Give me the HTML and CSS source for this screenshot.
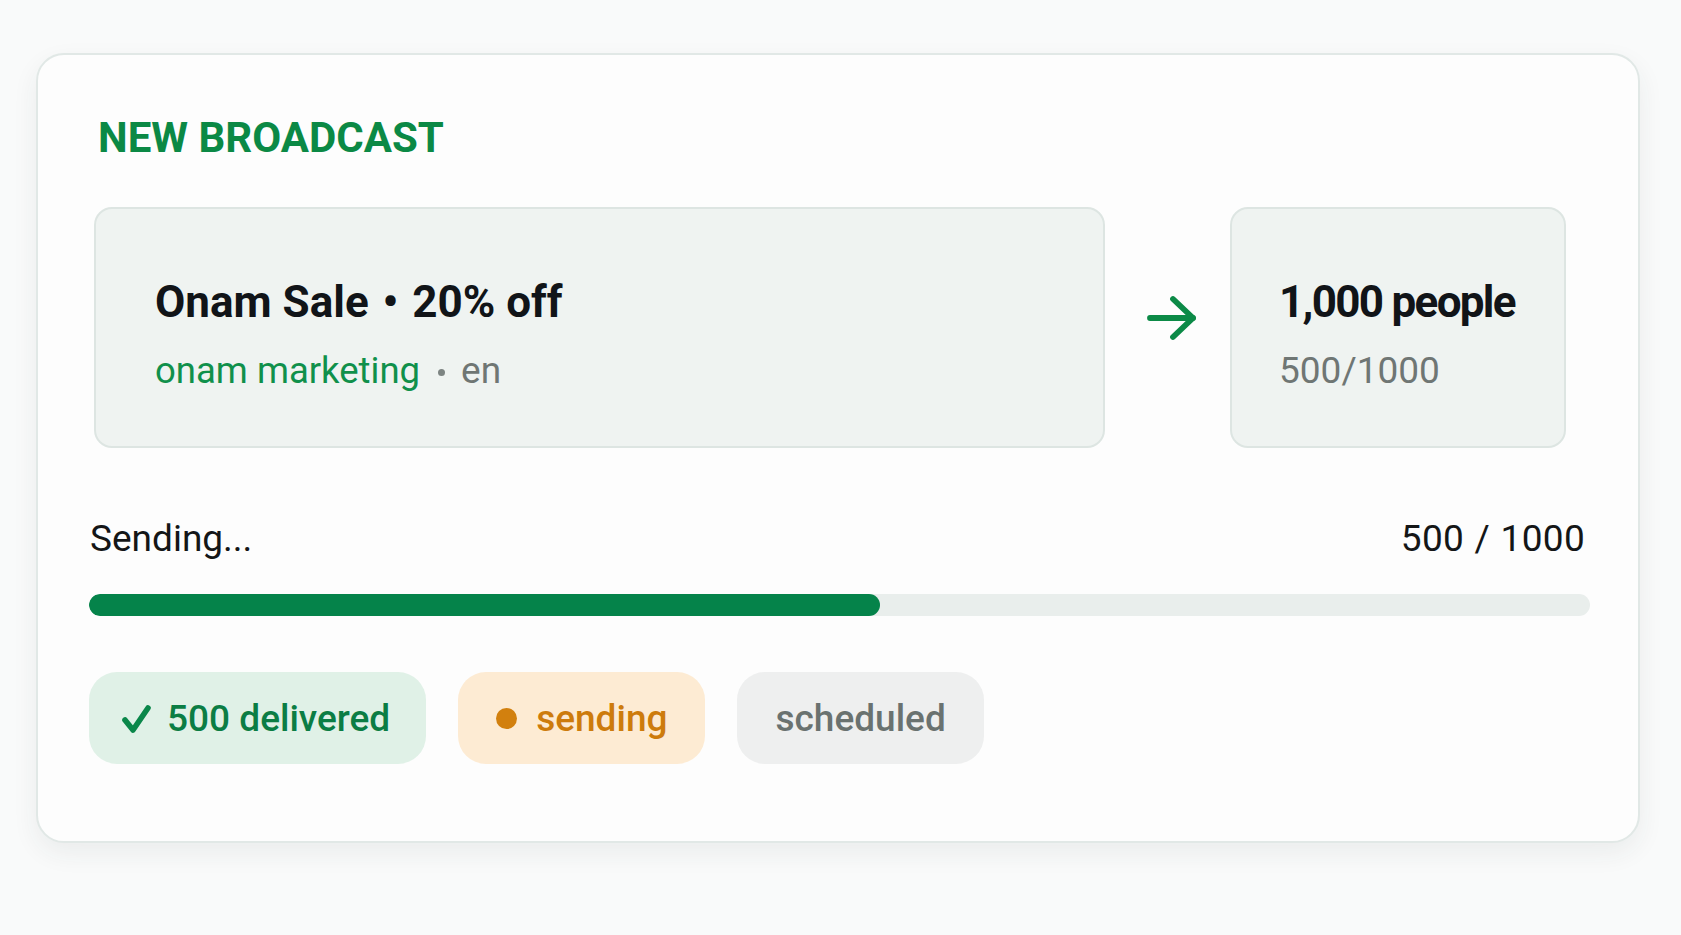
FILE: index.html
```html
<!DOCTYPE html>
<html lang="en">
<head>
<meta charset="utf-8">
<title>New Broadcast</title>
<link rel="stylesheet" href="styles.css">
</head>
<body>
<main class="card">
  <h1 class="heading">NEW BROADCAST</h1>
  <section class="flow">
    <div class="box box-message">
      <div class="box-title">Onam Sale <span class="title-sep">•</span> 20% off</div>
      <div class="box-sub"><span class="tag">onam marketing</span><span class="sep"></span><span class="muted">en</span></div>
    </div>
    <div class="arrow">
      <svg width="52" height="46" viewBox="0 0 52 46" fill="none" stroke="currentColor" stroke-width="5.8" stroke-linecap="round" stroke-linejoin="round">
        <path d="M4 23 H47"/>
        <path d="M27 4 L47 23 L27 42"/>
      </svg>
    </div>
    <div class="box box-audience">
      <div class="box-title audience-title">1,000 people</div>
      <div class="box-sub muted-strong">500/1000</div>
    </div>
  </section>
  <section class="progress">
    <div class="progress-head">
      <span>Sending...</span>
      <span class="count">500 / 1000</span>
    </div>
    <div class="track"><div class="fill" style="width: 52.7%"></div></div>
  </section>
  <section class="pills">
    <span class="pill pill-done">
      <svg class="check" width="30" height="30" viewBox="0 0 30 30" fill="none" stroke="currentColor" stroke-width="5.6" stroke-linecap="round" stroke-linejoin="round">
        <path d="M4 16 L12 26 L27 4"/>
      </svg>
      500 delivered
    </span>
    <span class="pill pill-sending"><span class="dot"></span>sending</span>
    <span class="pill pill-scheduled">scheduled</span>
  </section>
</main>
</body>
</html>
```

FILE: styles.css
```css
* { box-sizing: border-box; }

html, body {
  margin: 0;
  padding: 0;
}

body {
  background: #f9fafa;
  font-family: Roboto, "Liberation Sans", sans-serif;
  color: #121417;
  width: 1681px;
  height: 935px;
  overflow: hidden;
}

.card {
  margin: 53px 0 0 36px;
  width: 1604px;
  height: 790px;
  background: #fdfdfd;
  border: 2px solid #e1e8e6;
  border-radius: 28px;
  box-shadow: 0 10px 26px rgba(40, 60, 55, 0.07);
  padding: 62px 48px 0 51px;
}

.heading {
  margin: 0 0 48px 9px;
  font-size: 42px;
  line-height: 42px;
  font-weight: 700;
  color: #0b8945;
}

.flow {
  display: flex;
  align-items: center;
  margin: 0 24px 0 5px;
}

.box {
  height: 241px;
  background: #eff3f1;
  border: 2px solid #dde5e2;
  border-radius: 18px;
  display: flex;
  flex-direction: column;
  padding-top: 71px;
}

.box-message {
  flex: 1;
  padding-left: 59px;
}

.box-audience {
  width: 336px;
  padding-left: 47px;
}

.box-title {
  font-size: 44px;
  line-height: 44px;
  font-weight: 700;
  color: #111418;
}

.title-sep { margin: 0 3px; }

.audience-title { letter-spacing: -1.7px; }

.box-sub {
  margin-top: 28px;
  font-size: 37px;
  line-height: 37px;
  color: #757c7a;
  display: flex;
  align-items: center;
}

.tag { color: #10904b; font-size: 36.5px; }
.sep {
  width: 7px;
  height: 7px;
  border-radius: 50%;
  background: #7d8482;
  margin: 4px 16px 0 18px;
}
.muted { color: #6f7674; }
.muted-strong { color: #6f7674; }

.arrow {
  width: 125px;
  display: flex;
  justify-content: center;
  color: #0c8a47;
  padding-left: 8px;
  margin-bottom: 19px;
}

.progress {
  margin-top: 72px;
}

.progress-head {
  display: flex;
  justify-content: space-between;
  font-size: 37px;
  line-height: 37px;
  color: #141617;
  padding: 0 5px 0 1px;
}

.count { word-spacing: 1px; letter-spacing: 0.3px; }

.track {
  margin-top: 37px;
  height: 22px;
  border-radius: 11px;
  background: #e9eeec;
  overflow: hidden;
}

.fill {
  height: 100%;
  border-radius: 11px;
  background: #05834a;
}

.pills {
  margin-top: 56px;
  display: flex;
  gap: 32px;
}

.pill {
  height: 92px;
  border-radius: 28px;
  display: inline-flex;
  align-items: center;
  padding: 0 38px;
  font-size: 37px;
  line-height: 37px;
  font-weight: 500;
}

.pill-done {
  background: #e0f1e7;
  color: #0b7d44;
  padding-left: 32px;
  padding-right: 36px;
}

.check { margin-right: 16px; margin-top: 2px; color: #0a874a; }

.pill-sending {
  background: #fdebd3;
  color: #cd7b0c;
}

.dot {
  width: 21px;
  height: 21px;
  border-radius: 50%;
  background: #d2800e;
  margin-right: 19px;
}

.pill-scheduled {
  background: #eeefef;
  color: #6a7270;
}
```
